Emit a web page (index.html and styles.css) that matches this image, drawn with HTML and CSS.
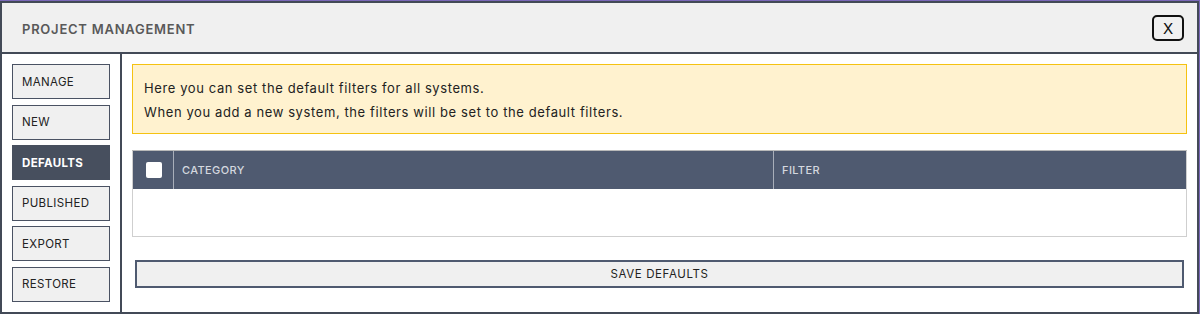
FILE: index.html
```html
<!DOCTYPE html>
<html lang="en">
<head>
    <meta charset="UTF-8">
    <meta name="viewport" content="width=device-width, initial-scale=1.0">
    <title>Project Management</title>
    <link rel="stylesheet" href="styles.css">
</head>
<body>
    <div class="modal">
        <div class="modal-header">
            <h1>PROJECT MANAGEMENT</h1>
            <button class="close-button">X</button>
        </div>
        <div class="modal-body">
            <div class="sidebar">
                <button class="nav-button">MANAGE</button>
                <button class="nav-button">NEW</button>
                <button class="nav-button active">DEFAULTS</button>
                <button class="nav-button">PUBLISHED</button>
                <button class="nav-button">EXPORT</button>
                <button class="nav-button">RESTORE</button>
            </div>
            <div class="content">
                <div class="alert">
                    <p>Here you can set the default filters for all systems.</p>
                    <p>When you add a new system, the filters will be set to the default filters.</p>
                </div>
                <table class="filter-table">
                    <thead>
                        <tr>
                            <th class="check-col"><span class="checkbox"></span></th>
                            <th class="category-col">CATEGORY</th>
                            <th>FILTER</th>
                        </tr>
                    </thead>
                    <tbody>
                        <tr class="empty-row"><td colspan="3"></td></tr>
                    </tbody>
                </table>
                <button class="save-button">SAVE DEFAULTS</button>
            </div>
        </div>
    </div>
</body>
</html>
```

FILE: styles.css
```css
body {
    margin: 0;
    font-family: Inter, "Open Sans", Arial, sans-serif;
    background-color: #7a68b8;
    height: 314px;
    overflow: hidden;
}
.modal {
    box-sizing: border-box;
    width: 1199px;
    height: 314px;
    margin-top: 1px;
    background-color: #fff;
    border: 2px solid #434a57;
    border-bottom-width: 3px;
    display: flex;
    flex-direction: column;
}
.modal-header {
    height: 49px;
    background-color: #f0f0f0;
    border-bottom: 2px solid #434a57;
    display: flex;
    align-items: center;
    justify-content: space-between;
    padding: 0 13px 0 20px;
}
.modal-header h1 {
    margin: 2px 0 0 0;
    font-size: 13px;
    font-weight: 600;
    color: #595959;
    letter-spacing: 0.75px;
}
.close-button {
    width: 32px;
    height: 26px;
    background-color: #f0f0f0;
    border: 2px solid #111;
    border-radius: 5px;
    font-family: inherit;
    font-size: 15px;
    color: #111;
    padding: 0;
    margin-top: 1px;
    cursor: pointer;
}
.modal-body {
    flex: 1;
    display: flex;
}
.sidebar {
    width: 98px;
    padding: 10px 10px 0 10px;
    border-right: 2px solid #434a57;
    display: flex;
    flex-direction: column;
    gap: 5.5px;
}
.nav-button {
    height: 35px;
    background-color: #f0f0f0;
    border: 1px solid #4a5263;
    text-align: left;
    padding: 0 0 0 9px;
    font-family: inherit;
    font-size: 11.5px;
    letter-spacing: 0.35px;
    color: #222;
    cursor: pointer;
}
.nav-button.active {
    background-color: #474f5e;
    border-color: #474f5e;
    color: #fff;
    font-weight: 700;
}
.content {
    flex: 1;
    padding: 10px 10px 0 10px;
}
.alert {
    background-color: #fff2cf;
    border: 1px solid #f5c211;
    padding: 11px 11px 9px 11px;
    margin-bottom: 16px;
}
.alert p {
    margin: 0;
    font-size: 13px;
    line-height: 24px;
    letter-spacing: 0.6px;
    color: #222;
}
.filter-table {
    width: 100%;
    border-collapse: collapse;
    border: 1px solid #cfcfcf;
}
.filter-table th {
    height: 38px;
    background-color: #4f5a70;
    color: #d4d8df;
    font-size: 11px;
    font-weight: 500;
    text-align: left;
    padding: 0 8px;
    border-left: 1px solid #a8aeb9;
    border-top: 1px solid #b9b9b9;
    letter-spacing: 0.4px;
}
.filter-table th:first-child {
    border-left: none;
}
.filter-table .check-col {
    width: 27px;
    padding: 0 0 0 13px;
}
.filter-table .category-col {
    width: 583px;
}
.checkbox {
    display: block;
    width: 16px;
    height: 16px;
    background-color: #fff;
    border-radius: 2px;
}
.empty-row td {
    height: 47px;
    padding: 0;
}
.save-button {
    display: block;
    width: calc(100% - 6px);
    height: 28px;
    margin: 23px 3px 0 3px;
    background-color: #f0f0f0;
    border: 2px solid #4f5a70;
    font-family: inherit;
    font-size: 11.5px;
    letter-spacing: 0.6px;
    color: #222;
    cursor: pointer;
}
```
